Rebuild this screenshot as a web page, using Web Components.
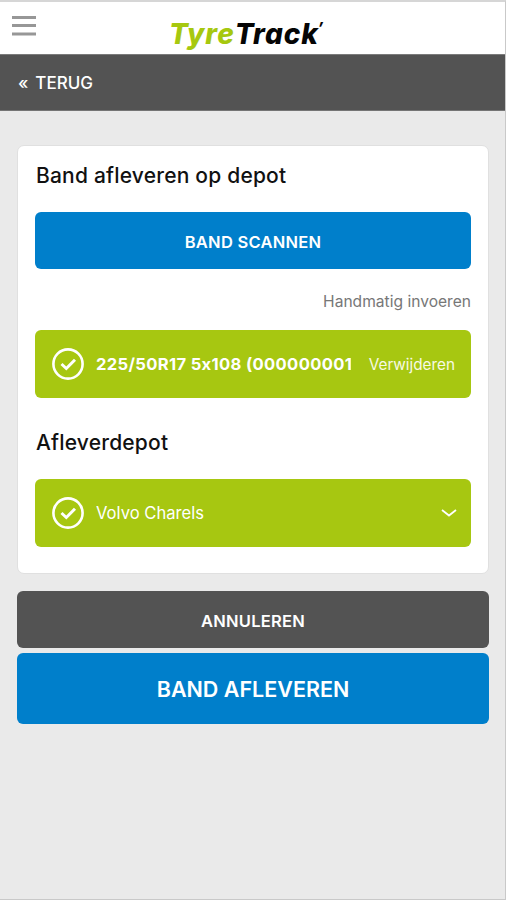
<!DOCTYPE html>
<html lang="nl">
<head>
<meta charset="utf-8">
<title>TyreTrack</title>
<style>
html, body { margin: 0; height: 100%; }
body { font-family: Inter, "Liberation Sans", sans-serif; font-feature-settings: "calt" 0; color: #111; background: #eaeaea; overflow: hidden; }
</style>
</head>
<body>
<tyre-app>
  <tyre-header slot="header"></tyre-header>
  <back-bar slot="header">TERUG</back-bar>
  <form-card>
    <card-title>Band afleveren op depot</card-title>
    <action-button style="--h:57px;--fs:16.5px;--ls:0.25px;--bg:#007fcb">BAND SCANNEN</action-button>
    <manual-link>Handmatig invoeren</manual-link>
    <check-row class="tyre" style="--weight:700;--ls:0.33px">225/50R17 5x108 (0000000011)<span slot="end">Verwijderen</span></check-row>
    <card-title class="second">Afleverdepot</card-title>
    <check-row class="depot" style="--weight:400;--ls:0px">Volvo Charels<chevron-down slot="end"></chevron-down></check-row>
  </form-card>
  <button-stack>
    <action-button style="--h:57px;--fs:16.5px;--ls:0.25px;--bg:#535353">ANNULEREN</action-button>
    <action-button style="--h:71px;--fs:21.5px;--ls:0px;--pt:0px;--bg:#007fcb">BAND AFLEVEREN</action-button>
  </button-stack>
</tyre-app>
<script>
const define = (name, html) => customElements.define(name, class extends HTMLElement {
  constructor() {
    super();
    const t = document.createElement('template');
    t.innerHTML = html;
    this.attachShadow({ mode: 'open' }).append(t.content.cloneNode(true));
  }
});

define('tyre-app', `<style>
:host { display: flex; flex-direction: column; box-sizing: border-box; height: 100vh; border-top: 2px solid #d6d6d6; border-right: 1px solid #c9c9c9; border-bottom: 1px solid #c9c9c9; background: #eaeaea; }
main { display: flex; flex-direction: column; gap: 17px; padding: 34px 16px 0 17px; }
</style><slot name="header"></slot><main><slot></slot></main>`);

define('tyre-header', `<style>
:host { display: grid; grid-template-columns: 133px 1fr; height: 52px; background: #fff; }
.menu { display: block; margin: 11px 0 0 12px; }
.logo { margin: 14px 0 0 36px; display: flex; align-items: flex-start; font: italic 800 28px/36px Inter, sans-serif; letter-spacing: 0.9px; color: #050505; white-space: nowrap; }
.green { color: #a6c80f; }
.mark { font-size: 15px; line-height: 20px; font-weight: 800; letter-spacing: 0; margin: 2px 0 0 -1px; }
</style>
<svg class="menu" width="24" height="24" viewBox="0 0 24 24" stroke="#979797" stroke-width="3"><path d="M0 4.5H24M0 12.5H24M0 21H24"/></svg>
<div class="logo"><span class="green">Tyre</span><span>Track</span><span class="mark">’</span></div>`);

define('back-bar', `<style>
:host { display: flex; align-items: center; gap: 7px; box-sizing: border-box; height: 57px; padding: 1px 0 0 18px; background: #535353; border-top: 1px solid #7b7b7b; border-bottom: 1px solid #757575; color: #fff; font-size: 17px; font-weight: 500; }
</style><span>«</span><span><slot></slot></span>`);

define('form-card', `<style>
:host { display: flex; flex-direction: column; box-sizing: border-box; height: 429px; padding: 15px 17px; background: #fff; border: 1px solid #e0e0e0; border-radius: 7px; }
</style><slot></slot>`);

define('card-title', `<style>
:host { display: block; height: 30px; margin: 0 1px 21px; font-size: 21px; line-height: 30px; font-weight: 500; letter-spacing: 0.2px; color: #111; white-space: nowrap; }
:host(.second) { margin: 30px 0 21px 1px; }
</style><slot></slot>`);

define('action-button', `<style>
:host { display: flex; align-items: center; justify-content: center; box-sizing: border-box; height: var(--h); flex: none; background: var(--bg); border-radius: 6px; color: #fff; font-size: var(--fs); font-weight: 600; letter-spacing: var(--ls); padding-top: var(--pt, 2px); }
</style><slot></slot>`);

define('manual-link', `<style>
:host { display: block; height: 24px; margin: 21px 0 16px; text-align: right; font-size: 15.6px; line-height: 24px; font-weight: 400; color: #777; }
</style><slot></slot>`);

define('check-row', `<style>
:host { display: flex; align-items: center; box-sizing: border-box; height: 68px; flex: none; padding: 0 16px 0 17px; background: #a7c711; border-radius: 6px; color: #fff; font-size: 16.6px; }
svg { flex: none; margin-right: 12px; }
.label { flex: 1; min-width: 0; overflow: hidden; white-space: nowrap; font-weight: var(--weight); letter-spacing: var(--ls); }
.end { flex: none; margin-left: 18px; font-size: 15.3px; color: #f7fae4; }
</style>
<svg width="32" height="32" viewBox="0 0 32 32" fill="none" stroke="#fff"><circle cx="16" cy="16" r="14.6" stroke-width="2.6"/><path d="M9.5 16L14.3 20.5L23 11.8" stroke-width="3"/></svg>
<div class="label"><slot></slot></div><div class="end"><slot name="end"></slot></div>`);

define('chevron-down', `<style>
:host { display: block; margin-right: -2px; }
svg { display: block; }
</style><svg width="16" height="9" viewBox="0 0 16 9" fill="none" stroke="#fff" stroke-width="1.8"><path d="M1 1L8 6.5L15 1"/></svg>`);

define('button-stack', `<style>
:host { display: flex; flex-direction: column; gap: 5px; }
</style><slot></slot>`);
</script>
</body>
</html>
